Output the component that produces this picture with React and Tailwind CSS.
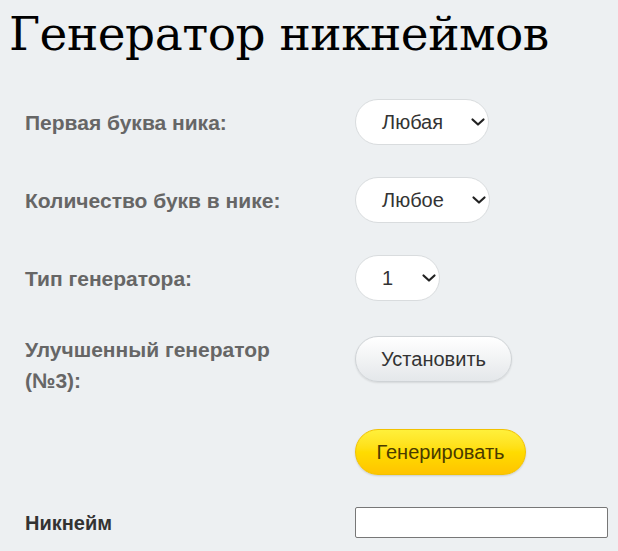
import React from 'react';

function Chevron() {
    return (
        <svg width="16" height="16" viewBox="0 0 16 16" className="shrink-0">
            <path d="M2.5 5.5l5.5 5 5.5-5" fill="none" stroke="#222" strokeWidth="2.2" strokeLinecap="round" strokeLinejoin="round" />
        </svg>
    );
}

function Select({ value, width }) {
    return (
        <div className={`h-[46px] ${width} flex items-center justify-between pl-[26px] pr-[2px] bg-white rounded-full border border-[#d9dcde] text-[20px] text-[#333]`}>
            <span>{value}</span>
            <Chevron />
        </div>
    );
}

function Row({ label, children, className = '' }) {
    return (
        <div className={`flex items-center ${className}`}>
            <div className="w-[355px] pl-[25px] text-[21px] font-bold text-[#666] leading-[31px]">{label}</div>
            {children}
        </div>
    );
}

export default function App() {
    return (
        <div className="w-[618px] h-[551px] overflow-hidden bg-[#edf0f2]" style={{ fontFamily: '"Liberation Sans", Arial, sans-serif' }}>
            <h1 className="pl-[9px] pt-[3px] text-[47px] leading-[62px] text-black tracking-[-0.5px]" style={{ fontFamily: '"DejaVu Serif", serif' }}>
                Генератор никнеймов
            </h1>
            <div className="flex flex-col pt-[34px]">
                <Row label="Первая буква ника:">
                    <Select value="Любая" width="w-[134px]" />
                </Row>
                <Row label="Количество букв в нике:" className="mt-[32px]">
                    <Select value="Любое" width="w-[135px]" />
                </Row>
                <Row label="Тип генератора:" className="mt-[32px]">
                    <Select value="1" width="w-[85px]" />
                </Row>
                <div className="flex items-start mt-[35px]">
                    <div className="w-[355px] pl-[25px] text-[21px] font-bold text-[#666] leading-[31px] -mt-[2px]">
                        Улучшенный генератор<br />(№3):
                    </div>
                    <button className="h-[46px] w-[157px] rounded-full border border-[#cfd3d6] bg-gradient-to-b from-white to-[#e4e7ea] text-[20px] text-[#333] shadow-[0_1px_2px_rgba(0,0,0,0.1)]">
                        Установить
                    </button>
                </div>
                <div className="flex mt-[33px]">
                    <div className="w-[355px]" />
                    <button className="h-[46px] w-[171px] rounded-full border border-[#f2c200] bg-gradient-to-b from-[#fff03a] via-[#ffdc00] to-[#ffc400] text-[20px] text-[#4a3b00] shadow-[0_1px_2px_rgba(0,0,0,0.15)]">
                        Генерировать
                    </button>
                </div>
                <div className="flex items-center mt-[32px]">
                    <div className="w-[355px] pl-[25px] text-[20px] font-bold text-[#333]">Никнейм</div>
                    <div className="h-[31px] w-[253px] bg-white border border-[#777] rounded-[2px]" />
                </div>
            </div>
        </div>
    );
}
